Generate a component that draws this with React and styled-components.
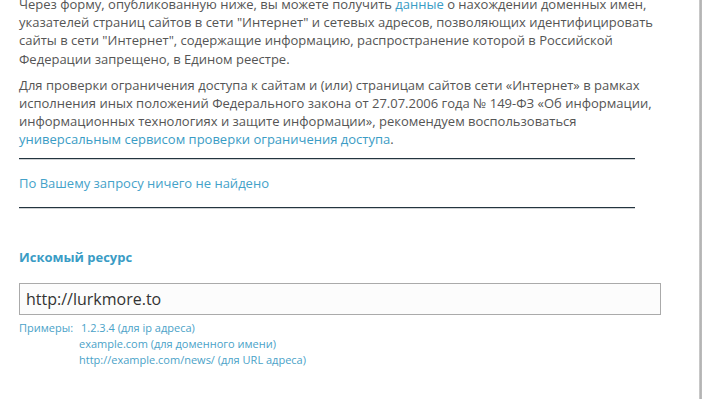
import React from 'react';
import styled, { createGlobalStyle } from 'styled-components';

const GlobalStyle = createGlobalStyle`
  html, body {
    margin: 0;
    padding: 0;
    background: #fff;
    overflow: hidden;
  }
  body {
    font-family: 'Open Sans', 'Noto Sans', sans-serif;
  }
`;

const Page = styled.div`
  display: flex;
  width: 702px;
  height: 399px;
  overflow: hidden;
`;

const Content = styled.div`
  flex: 1;
  padding: 0 0 0 19px;
  margin-top: -5px;
`;

const Edge = styled.div`
  width: 3px;
  background: linear-gradient(to right, #d6d6d6, #b3b3b3 40%, #bdbdbd);
`;

const Text = styled.p`
  margin: 0 0 ${(p) => p.gap || 0}px;
  width: 650px;
  font-size: 13px;
  line-height: 18.2px;
  color: #555;
  white-space: nowrap;
`;

const Link = styled.a`
  color: #3a9cc5;
  text-decoration: none;
`;

const Rule = styled.div`
  width: 616px;
  height: 1px;
  background: #24343f;
  box-shadow: 0 0.5px 0 rgba(36, 52, 63, 0.45);
  margin: ${(p) => p.top || 0}px 0 0;
`;

const Notice = styled.div`
  margin-top: 15px;
  font-size: 13px;
  line-height: 18px;
  color: #44a2c9;
`;

const Label = styled.div`
  margin-top: 40px;
  font-size: 13px;
  font-weight: 700;
  line-height: 18px;
  color: #3a9cc5;
`;

const Field = styled.input`
  display: block;
  box-sizing: border-box;
  width: 642px;
  height: 32px;
  margin-top: 17px;
  padding: 0 6px;
  border: 1px solid #aaa;
  background: #fcfcfc;
  font-family: 'Open Sans', sans-serif;
  font-size: 16px;
  color: #333;
  outline: none;
`;

const Examples = styled.div`
  display: flex;
  margin-top: 5px;
  font-size: 11px;
  line-height: 16px;
  color: #4aa2c8;
`;

const ExampleLabel = styled.div`
  width: 60px;
`;

const ExampleList = styled.div`
  display: flex;
  flex-direction: column;
`;

const ExampleItem = styled.span`
  padding-left: ${(p) => (p.first ? 2 : 0)}px;
`;

const App = () => {
  return (
    <Page>
      <GlobalStyle />
      <Content>
        <Text gap={8}>
          Через форму, опубликованную ниже, вы можете получить <Link href="#">данные</Link> о нахождении доменных имен,
          <br />
          указателей страниц сайтов в сети "Интернет" и сетевых адресов, позволяющих идентифицировать
          <br />
          сайты в сети "Интернет", содержащие информацию, распространение которой в Российской
          <br />
          Федерации запрещено, в Едином реестре.
        </Text>
        <Text>
          Для проверки ограничения доступа к сайтам и (или) страницам сайтов сети «Интернет» в рамках
          <br />
          исполнения иных положений Федерального закона от 27.07.2006 года № 149-ФЗ «Об информации,
          <br />
          информационных технологиях и защите информации», рекомендуем воспользоваться
          <br />
          <Link href="#">универсальным сервисом проверки ограничения доступа</Link>.
        </Text>
        <Rule top={9} />
        <Notice>По Вашему запросу ничего не найдено</Notice>
        <Rule top={15} />
        <Label>Искомый ресурс</Label>
        <Field defaultValue="http://lurkmore.to" />
        <Examples>
          <ExampleLabel>Примеры:</ExampleLabel>
          <ExampleList>
            <ExampleItem first>1.2.3.4 (для ip адреса)</ExampleItem>
            <ExampleItem>example.com (для доменного имени)</ExampleItem>
            <ExampleItem>http://example.com/news/ (для URL адреса)</ExampleItem>
          </ExampleList>
        </Examples>
      </Content>
      <Edge />
    </Page>
  );
};

export default App;
